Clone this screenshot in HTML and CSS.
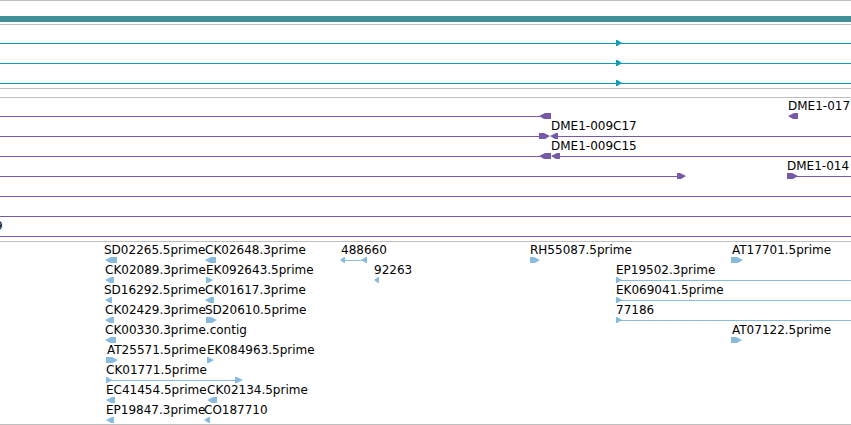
FILE: index.html
```html
<!DOCTYPE html>
<html lang="en">
<head>
<meta charset="utf-8">
<title>Genome tracks</title>
<link rel="stylesheet" href="styles.css">
</head>
<body>
<main class="viewer">
  <section class="track contig"><div class="contig-bar"></div></section>

  <section class="track genes">
    <div class="lane"><i class="line"></i><i class="arrow right short" style="left:616px;width:6px"></i></div>
    <div class="lane"><i class="line"></i><i class="arrow right short" style="left:616px;width:6px"></i></div>
    <div class="lane"><i class="line"></i><i class="arrow right short" style="left:616px;width:6px"></i></div>
  </section>

  <section class="track spacer"></section>

  <section class="track clones">
    <div class="lane">
      <i class="line" style="left:0;width:540px"></i><i class="arrow left" style="left:539px;width:12px"></i>
      <i class="arrow left" style="left:788px;width:10px"></i><span class="label" style="left:788px">DME1-017</span>
    </div>
    <div class="lane">
      <i class="line" style="left:0;width:540px"></i><i class="arrow right" style="left:539px;width:11px"></i>
      <i class="line" style="left:552px"></i><i class="arrow left" style="left:550px;width:8px"></i><span class="label" style="left:551px">DME1-009C17</span>
    </div>
    <div class="lane">
      <i class="line" style="left:0;width:540px"></i><i class="arrow left" style="left:539px;width:12px"></i>
      <i class="line" style="left:552px"></i><i class="arrow left" style="left:551px;width:9px"></i><span class="label" style="left:551px">DME1-009C15</span>
    </div>
    <div class="lane">
      <i class="line" style="left:0;width:678px"></i><i class="arrow right" style="left:677px;width:9px"></i>
      <i class="line" style="left:788px"></i><i class="arrow right" style="left:787px;width:11px"></i><span class="label" style="left:787px">DME1-014</span>
    </div>
    <div class="lane"><i class="line"></i></div>
    <div class="lane"><i class="line"></i></div>
    <div class="lane"><i class="line"></i><span class="label" style="left:-5px">9</span></div>
  </section>

  <section class="track ests">
    <div class="lane">
      <i class="arrow left" style="left:105px;width:12px"></i><span class="label" style="left:104px">SD02265.5prime</span>
      <i class="arrow left" style="left:205px;width:11px"></i><span class="label" style="left:205px">CK02648.3prime</span>
      <i class="line" style="left:342px;width:24px"></i><i class="arrow left short" style="left:340px;width:5px"></i><i class="arrow left short" style="left:361px;width:6px"></i><span class="label" style="left:341px">488660</span>
      <i class="arrow right" style="left:530px;width:10px"></i><span class="label" style="left:530px">RH55087.5prime</span>
      <i class="arrow right" style="left:731px;width:12px"></i><span class="label" style="left:732px">AT17701.5prime</span>
    </div>
    <div class="lane">
      <i class="arrow left" style="left:105px;width:9px"></i><span class="label" style="left:105px">CK02089.3prime</span>
      <i class="arrow right" style="left:206px;width:7px"></i><span class="label" style="left:206px">EK092643.5prime</span>
      <i class="arrow left short" style="left:374px;width:5px"></i><span class="label" style="left:374px">92263</span>
      <i class="line" style="left:616px"></i><i class="arrow right short" style="left:616px;width:6px"></i><span class="label" style="left:616px">EP19502.3prime</span>
    </div>
    <div class="lane">
      <i class="arrow left" style="left:105px;width:7px"></i><span class="label" style="left:104px">SD16292.5prime</span>
      <i class="arrow left" style="left:205px;width:9px"></i><span class="label" style="left:205px">CK01617.3prime</span>
      <i class="line" style="left:616px"></i><i class="arrow right short" style="left:616px;width:6px"></i><span class="label" style="left:616px">EK069041.5prime</span>
    </div>
    <div class="lane">
      <i class="arrow left" style="left:105px;width:9px"></i><span class="label" style="left:105px">CK02429.3prime</span>
      <i class="arrow right" style="left:206px;width:11px"></i><span class="label" style="left:205px">SD20610.5prime</span>
      <i class="line" style="left:616px"></i><i class="arrow right short" style="left:616px;width:6px"></i><span class="label" style="left:616px">77186</span>
    </div>
    <div class="lane">
      <i class="arrow left" style="left:105px;width:11px"></i><span class="label" style="left:105px">CK00330.3prime.contig</span>
      <i class="arrow right" style="left:731px;width:11px"></i><span class="label" style="left:732px">AT07122.5prime</span>
    </div>
    <div class="lane">
      <i class="arrow right" style="left:106px;width:12px"></i><span class="label" style="left:107px">AT25571.5prime</span>
      <i class="arrow right" style="left:207px;width:7px"></i><span class="label" style="left:207px">EK084963.5prime</span>
    </div>
    <div class="lane">
      <i class="line" style="left:106px;width:132px"></i><i class="arrow right short" style="left:106px;width:6px"></i><i class="arrow right short" style="left:235px;width:8px"></i><span class="label" style="left:106px">CK01771.5prime</span>
    </div>
    <div class="lane">
      <i class="arrow left" style="left:106px;width:9px"></i><span class="label" style="left:106px">EC41454.5prime</span>
      <i class="arrow left" style="left:207px;width:10px"></i><span class="label" style="left:207px">CK02134.5prime</span>
    </div>
    <div class="lane">
      <i class="arrow left" style="left:106px;width:8px"></i><span class="label" style="left:106px">EP19847.3prime</span>
      <i class="arrow left short" style="left:204px;width:6px"></i><span class="label" style="left:204px">CO187710</span>
    </div>
  </section>
</main>
</body>
</html>
```
FILE: styles.css
```css
body {
  margin: 0;
  background: #fff;
  color: #000;
  font: 12px/14px "DejaVu Sans", sans-serif;
}

.viewer {
  overflow: hidden;
  border-bottom: 1px solid #bfbfbf;
}

.track {
  border-top: 1px solid #bfbfbf;
}

.contig {
  padding: 15px 0 2px;
}

.contig-bar {
  height: 6px;
  background: #3f8f96;
}

.genes {
  color: #099cba;
  padding-bottom: 3px;
}

.genes .line {
  background: #7659a8;
  background: currentColor;
}

.spacer {
  height: 8px;
}

.clones {
  color: #7659a8;
  padding-bottom: 3px;
}

.ests {
  color: #88bbdd;
  padding-bottom: 2px;
}

/* Features sit at their sequence coordinate within a lane. */
.lane {
  position: relative;
  height: 20px;
}

.line,
.arrow,
.label {
  position: absolute;
}

.line {
  top: 18px;
  left: 0;
  right: 0;
  height: 1px;
  background: currentColor;
}

.arrow {
  top: 15px;
  height: 6px;
  background: currentColor;
}

.arrow.right {
  clip-path: polygon(0 0, calc(100% - 6px) 0, 100% 50%, calc(100% - 5px) 100%, 0 100%);
}

.arrow.left {
  clip-path: polygon(100% 0, 6px 0, 0 50%, 5px 100%, 100% 100%);
}

.arrow.right.short {
  clip-path: polygon(0 0, 20% 0, 100% 50%, 20% 100%, 0 100%);
}

.arrow.left.short {
  clip-path: polygon(100% 0, 80% 0, 0 50%, 80% 100%, 100% 100%);
}

.label {
  top: 1px;
  color: #000;
  white-space: nowrap;
}
```
